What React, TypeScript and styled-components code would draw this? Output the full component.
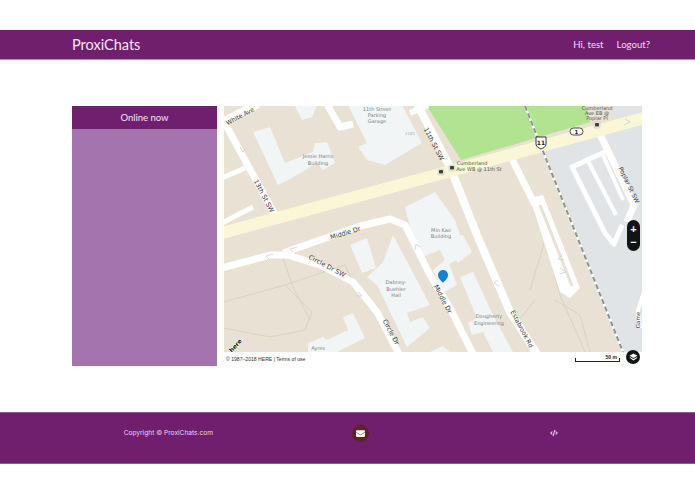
import React, { FC } from "react";
import styled, { createGlobalStyle } from "styled-components";
import { FaCode, FaEnvelope } from "react-icons/fa";

const GlobalStyle = createGlobalStyle`
  html, body {
    margin: 0;
    padding: 0;
    background: #ffffff;
  }
  body {
    font-family: Lato, "Open Sans", sans-serif;
  }
`;

const purple = "#6f1f6e";

const Page = styled.div`
  width: 695px;
  height: 494px;
  padding-top: 30px;
  box-sizing: border-box;
  overflow: hidden;
`;

const Header = styled.header`
  height: 30px;
  box-sizing: border-box;
  background: ${purple};
  border-bottom: 1px solid #b08abb;
  display: flex;
  justify-content: space-between;
  align-items: center;
  padding: 0 45px 0 72px;
`;

const Brand = styled.div`
  color: #fbe4fb;
  font-size: 14.5px;
`;

const Nav = styled.nav`
  display: flex;
  gap: 13px;
  color: #f6dcf6;
  font-size: 9.6px;
`;

const Main = styled.main`
  margin: 46px 0 46px 72px;
  display: flex;
  gap: 7px;
  height: 260px;
`;

const Sidebar = styled.aside`
  width: 145px;
  background: #a374ad;
`;

const SidebarTitle = styled.div`
  height: 23px;
  background: ${purple};
  color: #f6e2f6;
  font-size: 9.5px;
  display: flex;
  align-items: center;
  justify-content: center;
`;

const MapPanel = styled.section`
  position: relative;
  width: 418px;
`;

const MapSvg = styled.svg`
  display: block;
  width: 418px;
  height: 246px;
`;

const MapFooter = styled.div`
  height: 14px;
  display: flex;
  align-items: center;
  justify-content: space-between;
  padding: 0 22px 0 2px;
`;

const Attribution = styled.span`
  font-family: "Liberation Sans", sans-serif;
  font-size: 5.1px;
  color: #333333;
`;

const ScaleBar = styled.div`
  width: 45px;
  height: 4px;
  box-sizing: border-box;
  border: 1px solid #222222;
  border-top: none;
  position: relative;
  margin-top: 2px;
`;

const ScaleLabel = styled.span`
  position: absolute;
  right: 2px;
  bottom: 1px;
  font-family: "Liberation Sans", sans-serif;
  font-weight: 700;
  font-size: 5px;
  color: #222222;
`;

const ZoomControl = styled.div`
  position: absolute;
  left: 403px;
  top: 114px;
  width: 13px;
  height: 31px;
  border-radius: 7px;
  background: #101414;
  color: #ffffff;
  display: flex;
  flex-direction: column;
  align-items: center;
  justify-content: space-between;
  padding: 3px 0;
  box-sizing: border-box;
  font: 700 11px/12px "Liberation Sans", sans-serif;
`;

const LayerButton = styled.div`
  position: absolute;
  left: 402px;
  top: 244px;
  width: 14px;
  height: 14px;
  border-radius: 50%;
  background: #101414;
  display: flex;
  align-items: center;
  justify-content: center;
`;

const Footer = styled.footer`
  height: 52px;
  box-sizing: border-box;
  background: ${purple};
  border-top: 1px solid #93589a;
  border-bottom: 1px solid #93589a;
  padding: 0 45px 10px 72px;
  display: grid;
  grid-template-columns: repeat(3, 1fr);
  align-items: center;
  justify-items: center;
`;

const Copyright = styled.span`
  color: #ecd3ec;
  font-family: Inter, sans-serif;
  font-size: 6.6px;
`;

const MailBadge = styled.span`
  width: 17px;
  height: 17px;
  border-radius: 50%;
  background: #5e2323;
  color: #ffffff;
  display: flex;
  align-items: center;
  justify-content: center;
  font-size: 9px;
`;

const CodeLink = styled.span`
  color: #eec9ee;
  font-size: 8px;
  display: flex;
`;

const ground = "#e8e1d4";
const building = "#f2f5f5";
const lot = "#e0e4e6";

const buildings = [
  "253,132 270,127 285,163 313,152 315,143 327,142 335,163 323,170 317,163 292,178 278,185",
  "348,105 402,105 422,143 385,165 367,160 358,147 367,143",
  "295,106 317,105 312,117 302,120",
  "405,207 435,192 455,220 467,255 447,265 440,250 420,258 412,235",
  "393,235 430,305 407,313 410,322 423,317 430,328 407,347 377,285 367,277 377,268 383,262",
  "350,245 367,238 376,268 362,273",
  "433,270 447,258 457,285 443,293",
  "443,238 463,235 472,252 458,263",
  "460,277 473,272 493,315 513,352 493,352 483,332 472,335 468,323 477,318",
  "343,317 353,313 365,338 337,352 308,352 308,343 323,337 327,340 348,330",
  "430,352 443,346 450,352",
];

const roads = [
  { points: "222,122 258,104", width: 8 },
  { points: "222,118 275,215", width: 7 },
  { points: "222,178 245,168", width: 5 },
  { points: "222,223 253,207", width: 5 },
  { points: "327,104 340,127 353,124", width: 7 },
  { points: "410,113 428,105", width: 6 },
  { points: "415,100 450,167 477,235 510,312 537,354", width: 8 },
  { points: "222,268 270,255 287,255 320,265 353,282 377,312 399,354", width: 7 },
  { points: "283,253 360,226 390,219 405,225 430,275 450,308 473,354", width: 7 },
  { points: "510,155 535,205", width: 7 },
  { points: "597,128 634,205 627,222", width: 7 },
  { points: "609,150 572,167 605,233 614,244 622,225", width: 5 },
  { points: "588,161 616,215", width: 4 },
  { points: "603,155 623,200", width: 4 },
  { points: "644,292 638,310 640,328", width: 4 },
];

const paths = [
  "283,258 292,285 310,320",
  "224,302 285,285 345,265 353,282",
  "224,328 270,337 305,330 312,312 285,285",
  "512,160 540,220 560,295 585,352",
  "555,300 580,315 590,352",
  "535,300 515,325",
  "545,240 530,290",
];

const roadText = "#333a3c";
const buildingText = "#7a8486";
const stopText = "#4c5658";

const labels = [
  { text: "White Ave", x: 241, y: 118, rotate: -28, size: 6, color: roadText },
  { text: "13th St SW", x: 262, y: 197, rotate: 62, size: 6.5, color: roadText },
  { text: "11th St SW", x: 432, y: 145, rotate: 62, size: 6.5, color: roadText },
  { text: "Middle Dr", x: 346, y: 235, rotate: -17, size: 6.5, color: roadText },
  { text: "Middle Dr", x: 441, y: 300, rotate: 62, size: 6.5, color: roadText },
  { text: "Circle Dr SW", x: 326, y: 268, rotate: 28, size: 6.5, color: roadText },
  { text: "Circle Dr", x: 389, y: 333, rotate: 62, size: 6.5, color: roadText },
  { text: "Estabrook Rd", x: 520, y: 330, rotate: 62, size: 6.2, color: roadText },
  { text: "Poplar St SW", x: 627, y: 186, rotate: 64, size: 6.2, color: roadText },
  { text: "Game", x: 640, y: 320, rotate: -90, size: 5.5, color: roadText },
  { text: "11th Street", x: 377, y: 110.5, rotate: 0, size: 5, color: buildingText },
  { text: "Parking", x: 377, y: 117, rotate: 0, size: 5, color: buildingText },
  { text: "Garage", x: 377, y: 123, rotate: 0, size: 5, color: buildingText },
  { text: "1181", x: 410, y: 135, rotate: 0, size: 4, color: "#a4adaf" },
  { text: "Jessie Harris", x: 318, y: 158, rotate: 0, size: 5, color: buildingText },
  { text: "Building", x: 318, y: 165, rotate: 0, size: 5, color: buildingText },
  { text: "Min Kao", x: 441, y: 232, rotate: 0, size: 5, color: buildingText },
  { text: "Building", x: 441, y: 238, rotate: 0, size: 5, color: buildingText },
  { text: "Dabney-", x: 396, y: 284, rotate: 0, size: 5, color: buildingText },
  { text: "Buehler", x: 396, y: 291, rotate: 0, size: 5, color: buildingText },
  { text: "Hall", x: 396, y: 297, rotate: 0, size: 5, color: buildingText },
  { text: "Dougherty", x: 489, y: 318, rotate: 0, size: 5, color: buildingText },
  { text: "Engineering", x: 489, y: 325, rotate: 0, size: 5, color: buildingText },
  { text: "Ayres", x: 318, y: 350, rotate: 0, size: 5, color: buildingText },
  { text: "Cumberland", x: 472, y: 165, rotate: 0, size: 5, color: stopText },
  { text: "Ave WB @ 11th St", x: 479, y: 171, rotate: 0, size: 5, color: stopText },
  { text: "Cumberland", x: 597, y: 109.5, rotate: 0, size: 5, color: stopText },
  { text: "Ave EB @", x: 597, y: 115, rotate: 0, size: 5, color: stopText },
  { text: "Poplar Pl", x: 597, y: 120, rotate: 0, size: 5, color: stopText },
];

const arrows = [
  "273,254 266,256 269,259",
  "297,247 290,249 293,252",
  "420,247 416,244 415,250",
  "358,292 362,296 356,296",
  "498,280 494,283 499,286",
  "562,255 558,259 564,260",
  "560,268 566,272 560,274",
  "240,147 243,152 246,148",
  "625,119 630,122 624,125",
];

const BusStop: FC<{ x: number; y: number }> = ({ x, y }) => (
  <g transform={`translate(${x} ${y})`}>
    <rect x={-3} y={-3} width={6} height={6} rx={1} fill="#f4f1e4" stroke="#bdb9a8" strokeWidth={0.5} />
    <rect x={-2} y={-2} width={4} height={3.4} rx={0.6} fill="#3a4446" />
  </g>
);

const MapDrawing: FC = () => (
  <MapSvg viewBox="224 106 418 246">
    <rect x={224} y={106} width={418} height={246} fill={ground} />
    <polygon points="547,150 642,123 642,352 622,352" fill={lot} />
    <polygon points="612,106 642,106 642,113 618,120" fill={lot} />
    <polygon points="427,106 586,106 590,122 461,160" fill="#b1e391" />
    {buildings.map((points) => (
      <polygon key={points} points={points} fill={building} />
    ))}
    {paths.map((points) => (
      <polyline key={points} points={points} fill="none" stroke="#d2cbbb" strokeWidth={0.7} />
    ))}
    {roads.map((road) => (
      <polyline
        key={road.points}
        points={road.points}
        fill="none"
        stroke="#ffffff"
        strokeWidth={road.width}
        strokeLinejoin="round"
      />
    ))}
    <polygon points="530,198 543,195 580,288 570,298 560,292" fill="#ffffff" />
    <line x1={540} y1={205} x2={572} y2={286} stroke={ground} strokeWidth={3} />
    <polyline points="222,233 440,174 644,118" fill="none" stroke="#faf7d6" strokeWidth={12} />
    <line x1={525} y1={106} x2={623} y2={352} stroke="#ffffff" strokeWidth={2.4} />
    <line
      x1={525}
      y1={106}
      x2={623}
      y2={352}
      stroke="#87948f"
      strokeWidth={2}
      strokeDasharray="5 3"
    />
    {arrows.map((points) => (
      <polyline key={points} points={points} fill="none" stroke="#c9cfd2" strokeWidth={0.8} />
    ))}
    {labels.map((label) => (
      <text
        key={label.text + label.x}
        x={label.x}
        y={label.y}
        textAnchor="middle"
        fontFamily="'DejaVu Sans', sans-serif"
        fontSize={label.size}
        fill={label.color}
        transform={label.rotate ? `rotate(${label.rotate} ${label.x} ${label.y})` : undefined}
      >
        {label.text}
      </text>
    ))}
    <BusStop x={441} y={172} />
    <BusStop x={452} y={168} />
    <BusStop x={597} y={125} />
    <path d="M536 137h10v7c0 3-3 4-5 5-2-1-5-2-5-5z" fill="#ffffff" stroke="#222222" strokeWidth={0.9} />
    <text x={541} y={145} textAnchor="middle" fontFamily="'DejaVu Sans', sans-serif" fontWeight={700} fontSize={6} fill="#222222">
      11
    </text>
    <rect x={570} y={128} width={13} height={7} rx={3.5} fill="#ffffff" stroke="#222222" strokeWidth={0.8} />
    <text x={576.5} y={134} textAnchor="middle" fontFamily="'DejaVu Sans', sans-serif" fontWeight={700} fontSize={5.5} fill="#222222">
      1
    </text>
    <path d="M443 283c-1-2-5-4-5-8a5 5 0 0 1 10 0c0 4-4 6-5 8z" fill="#1083d8" />
    <text
      x={237}
      y={347}
      textAnchor="middle"
      fontFamily="'DejaVu Sans', sans-serif"
      fontWeight={700}
      fontSize={6}
      fill="#111111"
      stroke="#ffffff"
      strokeWidth={1.2}
      paintOrder="stroke"
      transform="rotate(-48 237 347)"
    >
      here
    </text>
  </MapSvg>
);

const App: FC = () => (
  <Page>
    <GlobalStyle />
    <Header>
      <Brand>ProxiChats</Brand>
      <Nav>
        <span>Hi, test</span>
        <span>Logout?</span>
      </Nav>
    </Header>
    <Main>
      <Sidebar>
        <SidebarTitle>Online now</SidebarTitle>
      </Sidebar>
      <MapPanel>
        <MapDrawing />
        <MapFooter>
          <Attribution>© 1987–2018 HERE | Terms of use</Attribution>
          <ScaleBar>
            <ScaleLabel>50 m</ScaleLabel>
          </ScaleBar>
        </MapFooter>
        <ZoomControl>
          <span>+</span>
          <span>−</span>
        </ZoomControl>
        <LayerButton>
          <svg width="9" height="8" viewBox="0 0 9 8">
            <path d="M4.5 0.5 8.5 2.7 4.5 4.9 0.5 2.7z" fill="#ffffff" />
            <path d="M1.3 4.2 4.5 6 7.7 4.2 8.5 4.8 4.5 7.4 0.5 4.8z" fill="#ffffff" />
          </svg>
        </LayerButton>
      </MapPanel>
    </Main>
    <Footer>
      <Copyright>Copyright © ProxiChats.com</Copyright>
      <MailBadge>
        <FaEnvelope />
      </MailBadge>
      <CodeLink>
        <FaCode />
      </CodeLink>
    </Footer>
  </Page>
);

export default App;
